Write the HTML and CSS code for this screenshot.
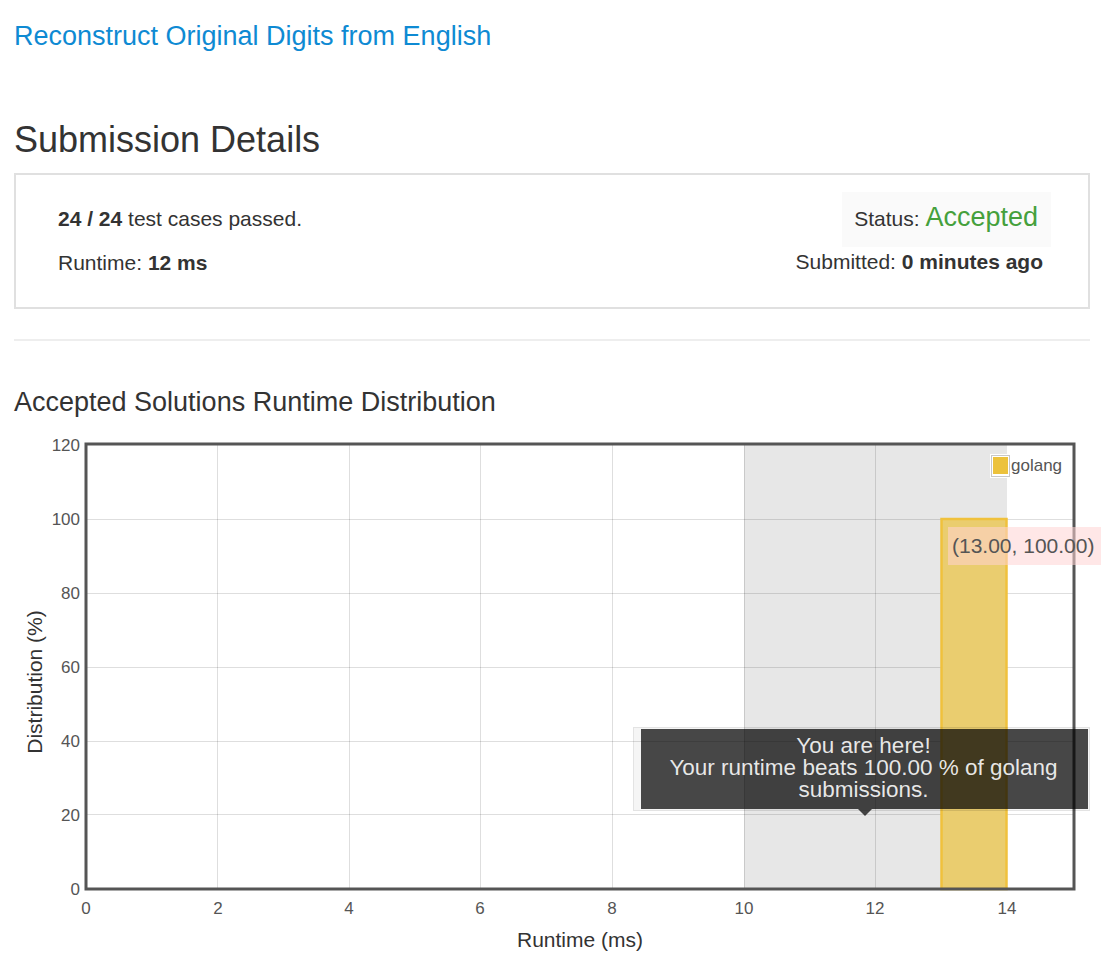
FILE: index.html
```html
<!DOCTYPE html>
<html lang="en">
<head>
<meta charset="utf-8">
<title>Submission Details</title>
<link rel="stylesheet" href="styles.css">
</head>
<body>
<div class="page">
  <a class="problem-link" href="#">Reconstruct Original Digits from English</a>
  <h2 class="page-title">Submission Details</h2>

  <div class="details">
    <div class="col-left">
      <div class="line"><b>24 / 24</b> test cases passed.</div>
      <div class="line line-2">Runtime: <b>12 ms</b></div>
    </div>
    <div class="col-right">
      <div class="status">Status: <span class="accepted">Accepted</span></div>
      <div class="submitted">Submitted: <b>0 minutes ago</b></div>
    </div>
  </div>

  <hr class="divider">

  <h3 class="chart-title">Accepted Solutions Runtime Distribution</h3>

  <div class="chart">
    <svg class="chart-svg" width="1087" height="547" viewBox="0 0 1087 547">
      <g transform="translate(-14 -418)">
        <rect x="86" y="444" width="988" height="445" fill="#fff"/>
        <rect x="744" y="445" width="263" height="444" fill="#e7e7e7"/>
        <g stroke="rgba(0,0,0,0.13)" stroke-width="1">
          <line x1="217.5" y1="445" x2="217.5" y2="889"/>
          <line x1="349.5" y1="445" x2="349.5" y2="889"/>
          <line x1="480.5" y1="445" x2="480.5" y2="889"/>
          <line x1="612.5" y1="445" x2="612.5" y2="889"/>
          <line x1="744.5" y1="445" x2="744.5" y2="889"/>
          <line x1="875.5" y1="445" x2="875.5" y2="889"/>
          <line x1="87" y1="519.5" x2="1073" y2="519.5"/>
          <line x1="87" y1="593.5" x2="1073" y2="593.5"/>
          <line x1="87" y1="667.5" x2="1073" y2="667.5"/>
          <line x1="87" y1="741.5" x2="1073" y2="741.5"/>
          <line x1="87" y1="814.5" x2="1073" y2="814.5"/>
        </g>
        <rect x="941.5" y="519" width="65" height="370" fill="#eacd6f" stroke="#f0c13c" stroke-width="2.5"/>
        <rect x="86" y="444" width="988" height="445" fill="none" stroke="#555" stroke-width="3"/>

        <rect x="990" y="454" width="20" height="24" fill="#fff"/>
        <rect x="991.5" y="455.5" width="18" height="21" fill="#fff" stroke="#c8c8c8" stroke-width="1"/>
        <rect x="993" y="457" width="15" height="17" fill="#ecc23c"/>
        <text class="legend-text" x="1011" y="471">golang</text>

        <g class="tick-y">
          <text x="80" y="889">0</text>
          <text x="80" y="815">20</text>
          <text x="80" y="741">40</text>
          <text x="80" y="667">60</text>
          <text x="80" y="593">80</text>
          <text x="80" y="519">100</text>
          <text x="80" y="445">120</text>
        </g>
        <g class="tick-x">
          <text x="86" y="908">0</text>
          <text x="218" y="908">2</text>
          <text x="349" y="908">4</text>
          <text x="480" y="908">6</text>
          <text x="612" y="908">8</text>
          <text x="744" y="908">10</text>
          <text x="875" y="908">12</text>
          <text x="1007" y="908">14</text>
        </g>
        <text class="axis-title" transform="translate(34 682) rotate(-90)">Distribution (%)</text>
        <text class="axis-title" x="580" y="939">Runtime (ms)</text>
      </g>
    </svg>

    <div class="point-tip">(13.00, 100.00)</div>

    <div class="here-frame">
      <div class="here-tip">You are here!<br>Your runtime beats 100.00 % of golang<br>submissions.</div>
    </div>
  </div>
</div>
</body>
</html>
```

FILE: styles.css
```css
html, body {
  margin: 0;
  padding: 0;
  background: #fff;
}

body {
  font-family: "Liberation Sans", Arial, sans-serif;
  color: #333;
  overflow-x: hidden;
}

.page {
  padding: 0 11px 0 14px;
}

.problem-link {
  display: block;
  margin-top: 19px;
  font-size: 27px;
  line-height: 34px;
  color: #0e8ad3;
  text-decoration: none;
}

.page-title {
  margin: 66px 0 12px;
  font-size: 36px;
  line-height: 42px;
  font-weight: normal;
  color: #333;
}

.details {
  display: flex;
  justify-content: space-between;
  align-items: flex-start;
  border: 2px solid #e0e0e0;
  padding: 29px 45px 29px 42px;
  font-size: 21px;
}

.col-left .line {
  line-height: 30px;
}

.col-left .line-2 {
  margin-top: 14px;
}

.col-right {
  display: flex;
  flex-direction: column;
  align-items: flex-end;
  margin-top: -12px;
}

.status {
  background: #fafafa;
  padding: 8px 13px 11px 12px;
  margin-right: -8px;
  font-size: 21px;
  line-height: 35px;
}

.accepted {
  font-size: 27px;
  line-height: 35px;
  color: #45a03c;
}

.submitted {
  margin-top: 1px;
  line-height: 28px;
}

.divider {
  margin: 30px 0 0;
  border: 0;
  border-top: 2px solid #eee;
  height: 0;
}

.chart-title {
  margin: 45px 0 0;
  font-size: 27px;
  line-height: 32px;
  font-weight: normal;
  color: #333;
}

.chart {
  position: relative;
  height: 547px;
  margin-right: -11px;
}

.chart-svg {
  display: block;
  font-family: "Liberation Sans", Arial, sans-serif;
}

.tick-y text {
  font-size: 17px;
  fill: #555;
  text-anchor: end;
  dominant-baseline: central;
}

.tick-x text {
  font-size: 17px;
  fill: #555;
  text-anchor: middle;
  dominant-baseline: central;
}

.legend-text {
  font-size: 17px;
  fill: #555;
}

.axis-title {
  font-size: 21px;
  fill: #333;
  text-anchor: middle;
  dominant-baseline: central;
}

.point-tip {
  position: absolute;
  left: 934px;
  top: 109px;
  width: 149px;
  height: 38px;
  padding-left: 4px;
  background: rgba(255, 212, 212, 0.55);
  color: #555;
  font-size: 21px;
  line-height: 38px;
  white-space: nowrap;
}

.here-frame {
  position: absolute;
  left: 619px;
  top: 309px;
  width: 447px;
  height: 80px;
  padding: 1px 1px 1px 7px;
  border: 1px solid rgba(0, 0, 0, 0.07);
  background: rgba(0, 0, 0, 0.04);
}

.here-tip {
  position: relative;
  height: 80px;
  box-sizing: border-box;
  padding: 6px 2px 0 0;
  background: rgba(0, 0, 0, 0.71);
  color: rgba(255, 255, 255, 0.88);
  font-size: 22.5px;
  line-height: 22px;
  text-align: center;
  white-space: nowrap;
}

.here-tip::after {
  content: "";
  position: absolute;
  left: 217px;
  top: 100%;
  border-top: 7px solid rgba(0, 0, 0, 0.71);
  border-left: 7px solid transparent;
  border-right: 7px solid transparent;
}
```
